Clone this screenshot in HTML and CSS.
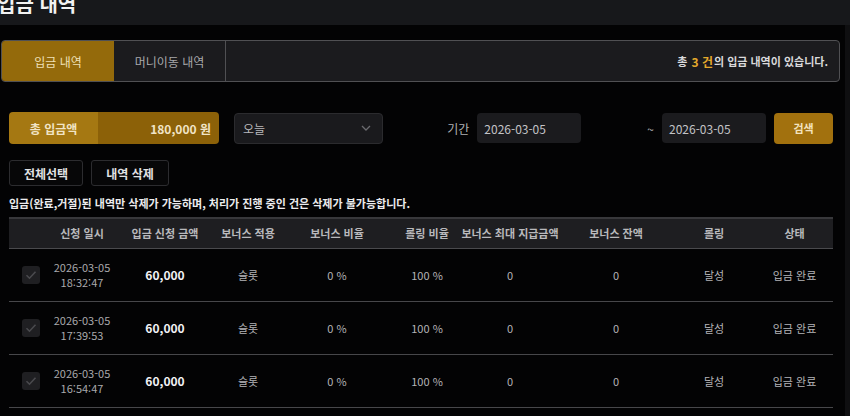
FILE: index.html
```html
<!DOCTYPE html>
<html lang="ko">
<head>
    <meta charset="UTF-8">
    <meta name="viewport" content="width=device-width, initial-scale=1.0">
    <title>입금 내역</title>
    <link rel="stylesheet" href="styles.css">
</head>
<body>
    <div class="page-head">
        <h1>입금 내역</h1>
    </div>
    <div class="content">
        <div class="tabs">
            <div class="tab active">입금 내역</div>
            <div class="tab">머니이동 내역</div>
            <div class="tab-info">총 <span class="hl">3 건</span>의 입금 내역이 있습니다.</div>
        </div>

        <div class="filter-row">
            <div class="total-box">
                <div class="total-label">총 입금액</div>
                <div class="total-value">180,000 원</div>
            </div>
            <div class="select-box">
                <span>오늘</span>
                <svg class="chevron" width="10" height="6" viewBox="0 0 10 6"><path d="M1 1l4 4 4-4" fill="none" stroke="#6a6a6e" stroke-width="1.3"/></svg>
            </div>
            <div class="period">
                <span class="period-label">기간</span>
                <div class="date-input">2026-03-05</div>
                <span class="tilde">~</span>
                <div class="date-input">2026-03-05</div>
                <button class="search-btn">검색</button>
            </div>
        </div>

        <div class="action-row">
            <button class="ghost-btn">전체선택</button>
            <button class="ghost-btn">내역 삭제</button>
        </div>
        <p class="notice">입금(완료,거절)된 내역만 삭제가 가능하며, 처리가 진행 중인 건은 삭제가 불가능합니다.</p>

        <table class="history">
            <colgroup>
                <col style="width:41px"><col style="width:64px"><col style="width:102px"><col style="width:64px"><col style="width:114px">
                <col style="width:66px"><col style="width:100px"><col style="width:112px"><col style="width:84px"><col style="width:77px">
            </colgroup>
            <thead>
                <tr>
                    <th></th>
                    <th>신청 일시</th>
                    <th>입금 신청 금액</th>
                    <th>보너스 적용</th>
                    <th>보너스 비율</th>
                    <th>롤링 비율</th>
                    <th>보너스 최대 지급금액</th>
                    <th>보너스 잔액</th>
                    <th>롤링</th>
                    <th>상태</th>
                </tr>
            </thead>
            <tbody id="rows"></tbody>
        </table>
    </div>

    <script>
        const deposits = [
            { date: '2026-03-05', time: '18:32:47' },
            { date: '2026-03-05', time: '17:39:53' },
            { date: '2026-03-05', time: '16:54:47' }
        ];

        const check = '<span class="chk"><svg width="12" height="10" viewBox="0 0 12 10"><path d="M1.5 5.2l3 3 6-6.5" fill="none" stroke="#4a4a4e" stroke-width="1.6"/></svg></span>';

        document.getElementById('rows').innerHTML = deposits.map(d => `
            <tr>
                <td>${check}</td>
                <td class="when">${d.date}<br>${d.time}</td>
                <td class="amount">60,000</td>
                <td>슬롯</td>
                <td>0 %</td>
                <td>100 %</td>
                <td>0</td>
                <td>0</td>
                <td>달성</td>
                <td>입금 완료</td>
            </tr>`).join('');
    </script>
</body>
</html>
```

FILE: styles.css
```css
* {
    box-sizing: border-box;
}
body {
    margin: 0;
    background: #0f0f11;
    font-family: 'Noto Sans CJK KR', 'Noto Sans', sans-serif;
    color: #bdbdc0;
    overflow: hidden;
}
.page-head {
    height: 25px;
    background: #17181b;
    overflow: hidden;
}
.page-head h1 {
    margin: -11px 0 0 -3px;
    font-size: 20px;
    line-height: 30px;
    font-weight: 700;
    color: #f2f2f2;
}
.content {
    width: 845px;
    height: 391px;
    background: #030304;
    padding: 15px 12px 0 9px;
}
.tabs {
    display: flex;
    align-items: stretch;
    height: 42px;
    margin: 0 -7px 0 -8px;
    background: #1b1b1e;
    border: 1px solid #505053;
    border-radius: 4px;
    overflow: hidden;
}
.tab {
    width: 112px;
    display: flex;
    align-items: center;
    justify-content: center;
    font-size: 12px;
    color: #a8a8ab;
    border-right: 1px solid #505053;
}
.tab.active {
    background: #946a0b;
    color: #f0e0b8;
    border-right: none;
}
.tab-info {
    flex: 1;
    display: flex;
    align-items: center;
    justify-content: flex-end;
    padding-right: 11px;
    font-size: 11px;
    font-weight: 700;
    color: #d9d9db;
}
.tab-info .hl {
    color: #e3a92c;
    font-size: 12px;
    margin: 0 1px 0 4px;
}
.filter-row {
    display: flex;
    align-items: center;
    margin-top: 30px;
    height: 32px;
}
.total-box {
    display: flex;
    width: 210px;
    height: 32px;
    border-radius: 4px;
    overflow: hidden;
    font-size: 12px;
    font-weight: 700;
    color: #f1e4c6;
}
.total-label {
    width: 89px;
    background: #a57812;
    display: flex;
    align-items: center;
    justify-content: center;
}
.total-value {
    flex: 1;
    background: #8c6108;
    display: flex;
    align-items: center;
    justify-content: flex-end;
    padding-right: 8px;
}
.select-box {
    width: 149px;
    height: 31px;
    margin-left: 15px;
    background: #1a1a1d;
    border: 1px solid #2b2b2e;
    border-radius: 4px;
    display: flex;
    align-items: center;
    justify-content: space-between;
    padding: 0 11px 0 8px;
    font-size: 12px;
    color: #b9b9bc;
}
.period {
    display: flex;
    align-items: center;
    margin-left: auto;
    font-size: 12px;
}
.period-label {
    color: #b0b0b3;
    margin-right: 8px;
}
.date-input {
    width: 104px;
    height: 30px;
    background: #1b1b1e;
    border-radius: 4px;
    display: flex;
    align-items: center;
    padding-left: 7px;
    color: #c3c3c6;
}
.tilde {
    margin: 0 8px 0 66px;
    color: #b0b0b3;
}
.search-btn {
    width: 59px;
    height: 31px;
    margin-left: 8px;
    border: none;
    border-radius: 4px;
    background: #a2710e;
    color: #f3e3bf;
    font-family: inherit;
    font-size: 11px;
    font-weight: 700;
}
.action-row {
    display: flex;
    gap: 8px;
    margin-top: 16px;
}
.ghost-btn {
    height: 26px;
    padding: 0 11px;
    background: #070708;
    border: 1px solid #2c2c2f;
    border-radius: 3px;
    color: #e2e2e4;
    font-family: inherit;
    font-size: 12px;
    font-weight: 700;
}
.ghost-btn:first-child {
    width: 74px;
}
.ghost-btn:last-child {
    width: 78px;
}
.notice {
    margin: 9px 0 0;
    font-size: 11px;
    font-weight: 700;
    color: #ececee;
    line-height: 16px;
}
.history {
    width: 824px;
    margin-top: 6px;
    border-collapse: collapse;
    table-layout: fixed;
    font-size: 11px;
}
.history th {
    height: 30px;
    background: #1e1e21;
    border-top: 2px solid #38383b;
    border-bottom: 1px solid #4a4a4d;
    font-weight: 700;
    color: #b9b9bc;
    text-align: center;
    padding: 0;
}
.history td {
    height: 53px;
    text-align: center;
    border-bottom: 1px solid #47474a;
    color: #b4b4b7;
    padding: 0;
}
.history td.when {
    line-height: 15px;
    color: #a9a9ac;
}
.history td.amount {
    font-size: 12px;
    font-weight: 700;
    color: #f2f2f4;
}
.chk {
    display: inline-flex;
    align-items: center;
    justify-content: center;
    width: 18px;
    height: 18px;
    margin-left: 2px;
    background: #1f1f22;
    border-radius: 3px;
    vertical-align: middle;
}
```
